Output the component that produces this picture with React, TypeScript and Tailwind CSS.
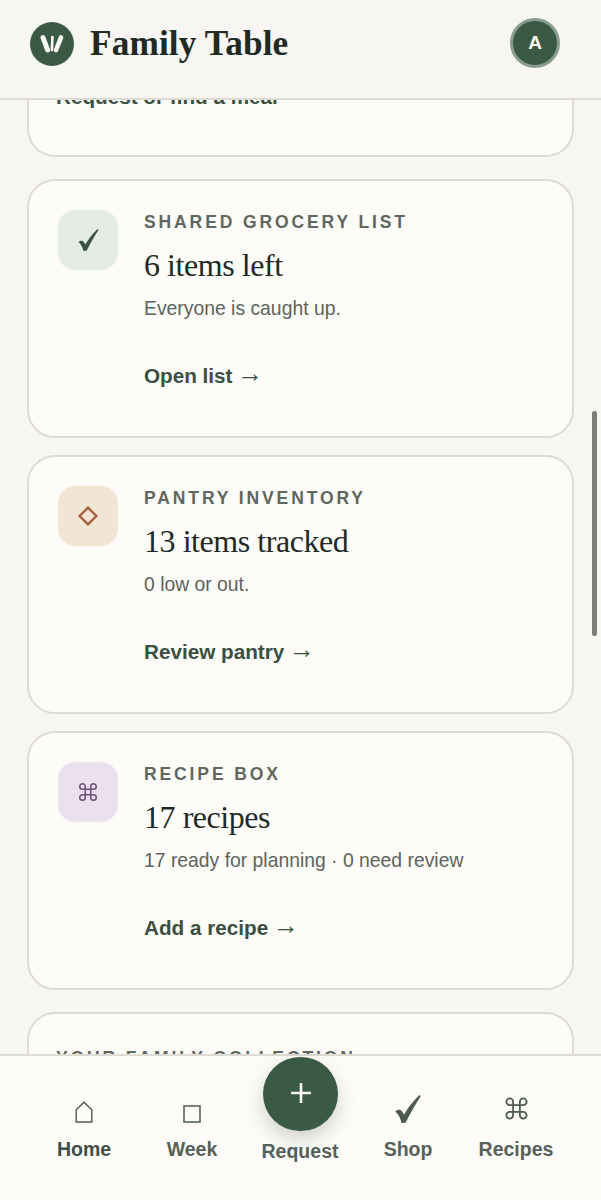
import { Command } from "lucide-react";
import type { ReactNode } from "react";

const sans = "font-['Liberation_Sans',Arial,sans-serif]";
const serif = "font-['Liberation_Serif','Times_New_Roman',serif]";

const checkPath =
  "M19.5 0 L20.5 1 C16 8 12.5 14 8.6 21.8 L5.5 22 C4.4 18 3 15 0.5 13 C1.8 11.8 3.5 11.2 4.8 12 C6 13 6.8 14.2 7.3 15.5 C10.5 10 14.5 5 19.5 0 Z";

interface SummaryCardProps {
  icon: ReactNode;
  iconBg: string;
  label: string;
  title: string;
  detail: string;
  action: string;
}

function Arrow() {
  return <span className={`${serif} -ml-[1px] align-[1px] text-[26px] font-normal leading-[0]`}>→</span>;
}

function SummaryCard({ icon, iconBg, label, title, detail, action }: SummaryCardProps) {
  return (
    <section className="flex h-[259px] shrink-0 gap-[26px] rounded-[28px] border-2 border-[#dedbd2] bg-[#fdfcf9] pl-[29px] pt-[29px]">
      <div className={`flex h-[60px] w-[60px] shrink-0 items-center justify-center rounded-[17px] ${iconBg}`}>{icon}</div>
      <div className="min-w-0">
        <div className="mt-[1px] text-[17.5px] font-bold leading-[22px] tracking-[0.165em] text-[#5f675f]">{label}</div>
        <div className={`${serif} mt-[12px] text-[32px] leading-[40px] tracking-[-0.45px] text-[#1f2a24]`}>{title}</div>
        <p className="mt-[10px] text-[19.35px] leading-[26px] text-[#5d635d]">{detail}</p>
        <div className="mt-[41px] text-[20.7px] font-bold leading-[28px] text-[#3a4f41]">
          {action} <Arrow />
        </div>
      </div>
    </section>
  );
}

function NavItem({ icon, label, bold }: { icon: ReactNode; label: string; bold?: boolean }) {
  return (
    <div className="flex w-[108px] flex-col items-center">
      <div className="flex h-[29px] items-end justify-center">{icon}</div>
      <span className={`mt-[13px] text-[19.5px] leading-[26px] ${bold ? "font-bold text-[#3f4f45]" : "font-bold text-[#566159]"}`}>{label}</span>
    </div>
  );
}

export default function App() {
  return (
    <div className={`${sans} relative flex h-[1200px] w-[601px] flex-col overflow-hidden bg-[#f7f6f2]`}>
      <header className="flex h-[100px] shrink-0 items-start justify-between border-b-2 border-[#dedbd3] bg-[#f7f6f3] pl-[30px] pr-[41px]">
        <div className="mt-[21px] flex items-center gap-[16px]">
          <div className="flex h-[44px] w-[44px] items-center justify-center rounded-full bg-[#3a5a45]">
            <svg width="26" height="20" viewBox="0 0 26 20" fill="none" stroke="#fdfcf9" strokeLinecap="round">
              <path d="M4 3.5 L8.6 16" strokeWidth="5" />
              <path d="M13.4 3 L12.9 16" strokeWidth="2.6" />
              <path d="M22 3.5 L17 16" strokeWidth="4.6" />
            </svg>
          </div>
          <span className={`${serif} mt-[1px] text-[35.3px] font-bold leading-[44px] tracking-[0.1px] text-[#1f2a24]`}>Family Table</span>
        </div>
        <div className="mt-[18px] flex h-[50px] w-[50px] items-center justify-center rounded-full border-[3px] border-[#8a9c8f] bg-[#3a5a45] text-[19px] font-bold text-[#fdfcf9]">
          A
        </div>
      </header>

      <main className="flex min-h-0 flex-1 flex-col overflow-hidden px-[27px]">
        <div className="flex h-[57px] shrink-0 flex-col rounded-b-[28px] border-x-2 border-b-2 border-[#dedbd2] bg-[#fdfcf9] pl-[27px]">
          <div className="-mt-[17px] text-[20.7px] font-bold leading-[28px] text-[#3a4f41]">Request or find a meal</div>
        </div>
        <div className="mt-[22px] flex flex-col gap-[17px]">
          <SummaryCard
            iconBg="bg-[#e4ebe5]"
            icon={
              <svg width="21" height="22" viewBox="0 0 21 22" fill="#3a5045">
                <path d={checkPath} />
              </svg>
            }
            label="SHARED GROCERY LIST"
            title="6 items left"
            detail="Everyone is caught up."
            action="Open list"
          />
          <SummaryCard
            iconBg="bg-[#f3e5d6]"
            icon={
              <svg width="20" height="20" viewBox="0 0 20 20" fill="none" stroke="#a0603a" strokeWidth="2.3">
                <path d="M10 1.6 L18.4 10 L10 18.4 L1.6 10 Z" />
              </svg>
            }
            label="PANTRY INVENTORY"
            title="13 items tracked"
            detail="0 low or out."
            action="Review pantry"
          />
          <SummaryCard
            iconBg="bg-[#ebe1ee]"
            icon={<Command size={22} strokeWidth={1.7} className="text-[#6d4f78]" />}
            label="RECIPE BOX"
            title="17 recipes"
            detail="17 ready for planning · 0 need review"
            action="Add a recipe"
          />
          <section className="mt-[5px] h-[120px] shrink-0 rounded-t-[28px] border-x-2 border-t-2 border-[#dedbd2] bg-[#fdfcf9] pl-[27px] pt-[33px]">
            <div className="text-[17.5px] font-bold leading-[22px] tracking-[0.165em] text-[#5f675f]">YOUR FAMILY COLLECTION</div>
          </section>
        </div>
      </main>

      <nav className="relative flex h-[146px] shrink-0 items-start border-t-2 border-[#dedbd3] bg-[#fdfcf9] pl-[30px] pr-[31px] pt-[38px]">
        <NavItem
          bold
          label="Home"
          icon={
            <svg width="18" height="22" viewBox="0 0 18 22" fill="none" stroke="#4c5a50" strokeWidth="1.4">
              <path d="M1.2 21 V8.8 L9 1.2 L16.8 8.8 V21 Z" />
            </svg>
          }
        />
        <NavItem
          label="Week"
          icon={
            <svg width="18" height="18" viewBox="0 0 18 18" fill="none" stroke="#4c5a50" strokeWidth="1.5">
              <path d="M1 1 H17 V17 H1 Z" />
            </svg>
          }
        />
        <div className="flex w-[108px] flex-col items-center">
          <div className="h-[29px]" />
          <span className="mt-[15px] text-[19.5px] font-bold leading-[26px] text-[#566159]">Request</span>
        </div>
        <NavItem
          label="Shop"
          icon={
            <svg width="28" height="28" viewBox="0 0 21 22" fill="#4c5a50">
              <path d={checkPath} />
            </svg>
          }
        />
        <NavItem
          label="Recipes"
          icon={<Command size={27} strokeWidth={1.6} className="mb-[1px] text-[#4c5a50]" />}
        />
        <button className="absolute left-[263px] top-[1px] flex h-[74px] w-[75px] items-center justify-center rounded-full bg-[#3a5a45] pb-[2px] text-white shadow-[0_8px_20px_rgba(40,60,48,0.22)]">
          <svg width="22" height="22" viewBox="0 0 22 22" stroke="#fdfcf9" strokeWidth="2.6">
            <path d="M11 1 V21 M1 11 H21" />
          </svg>
        </button>
      </nav>

      {/* overlay scrollbar thumb */}
      <div className="absolute left-[592px] top-[411px] h-[225px] w-[5px] rounded-full bg-[#7d7d78]" />
    </div>
  );
}
